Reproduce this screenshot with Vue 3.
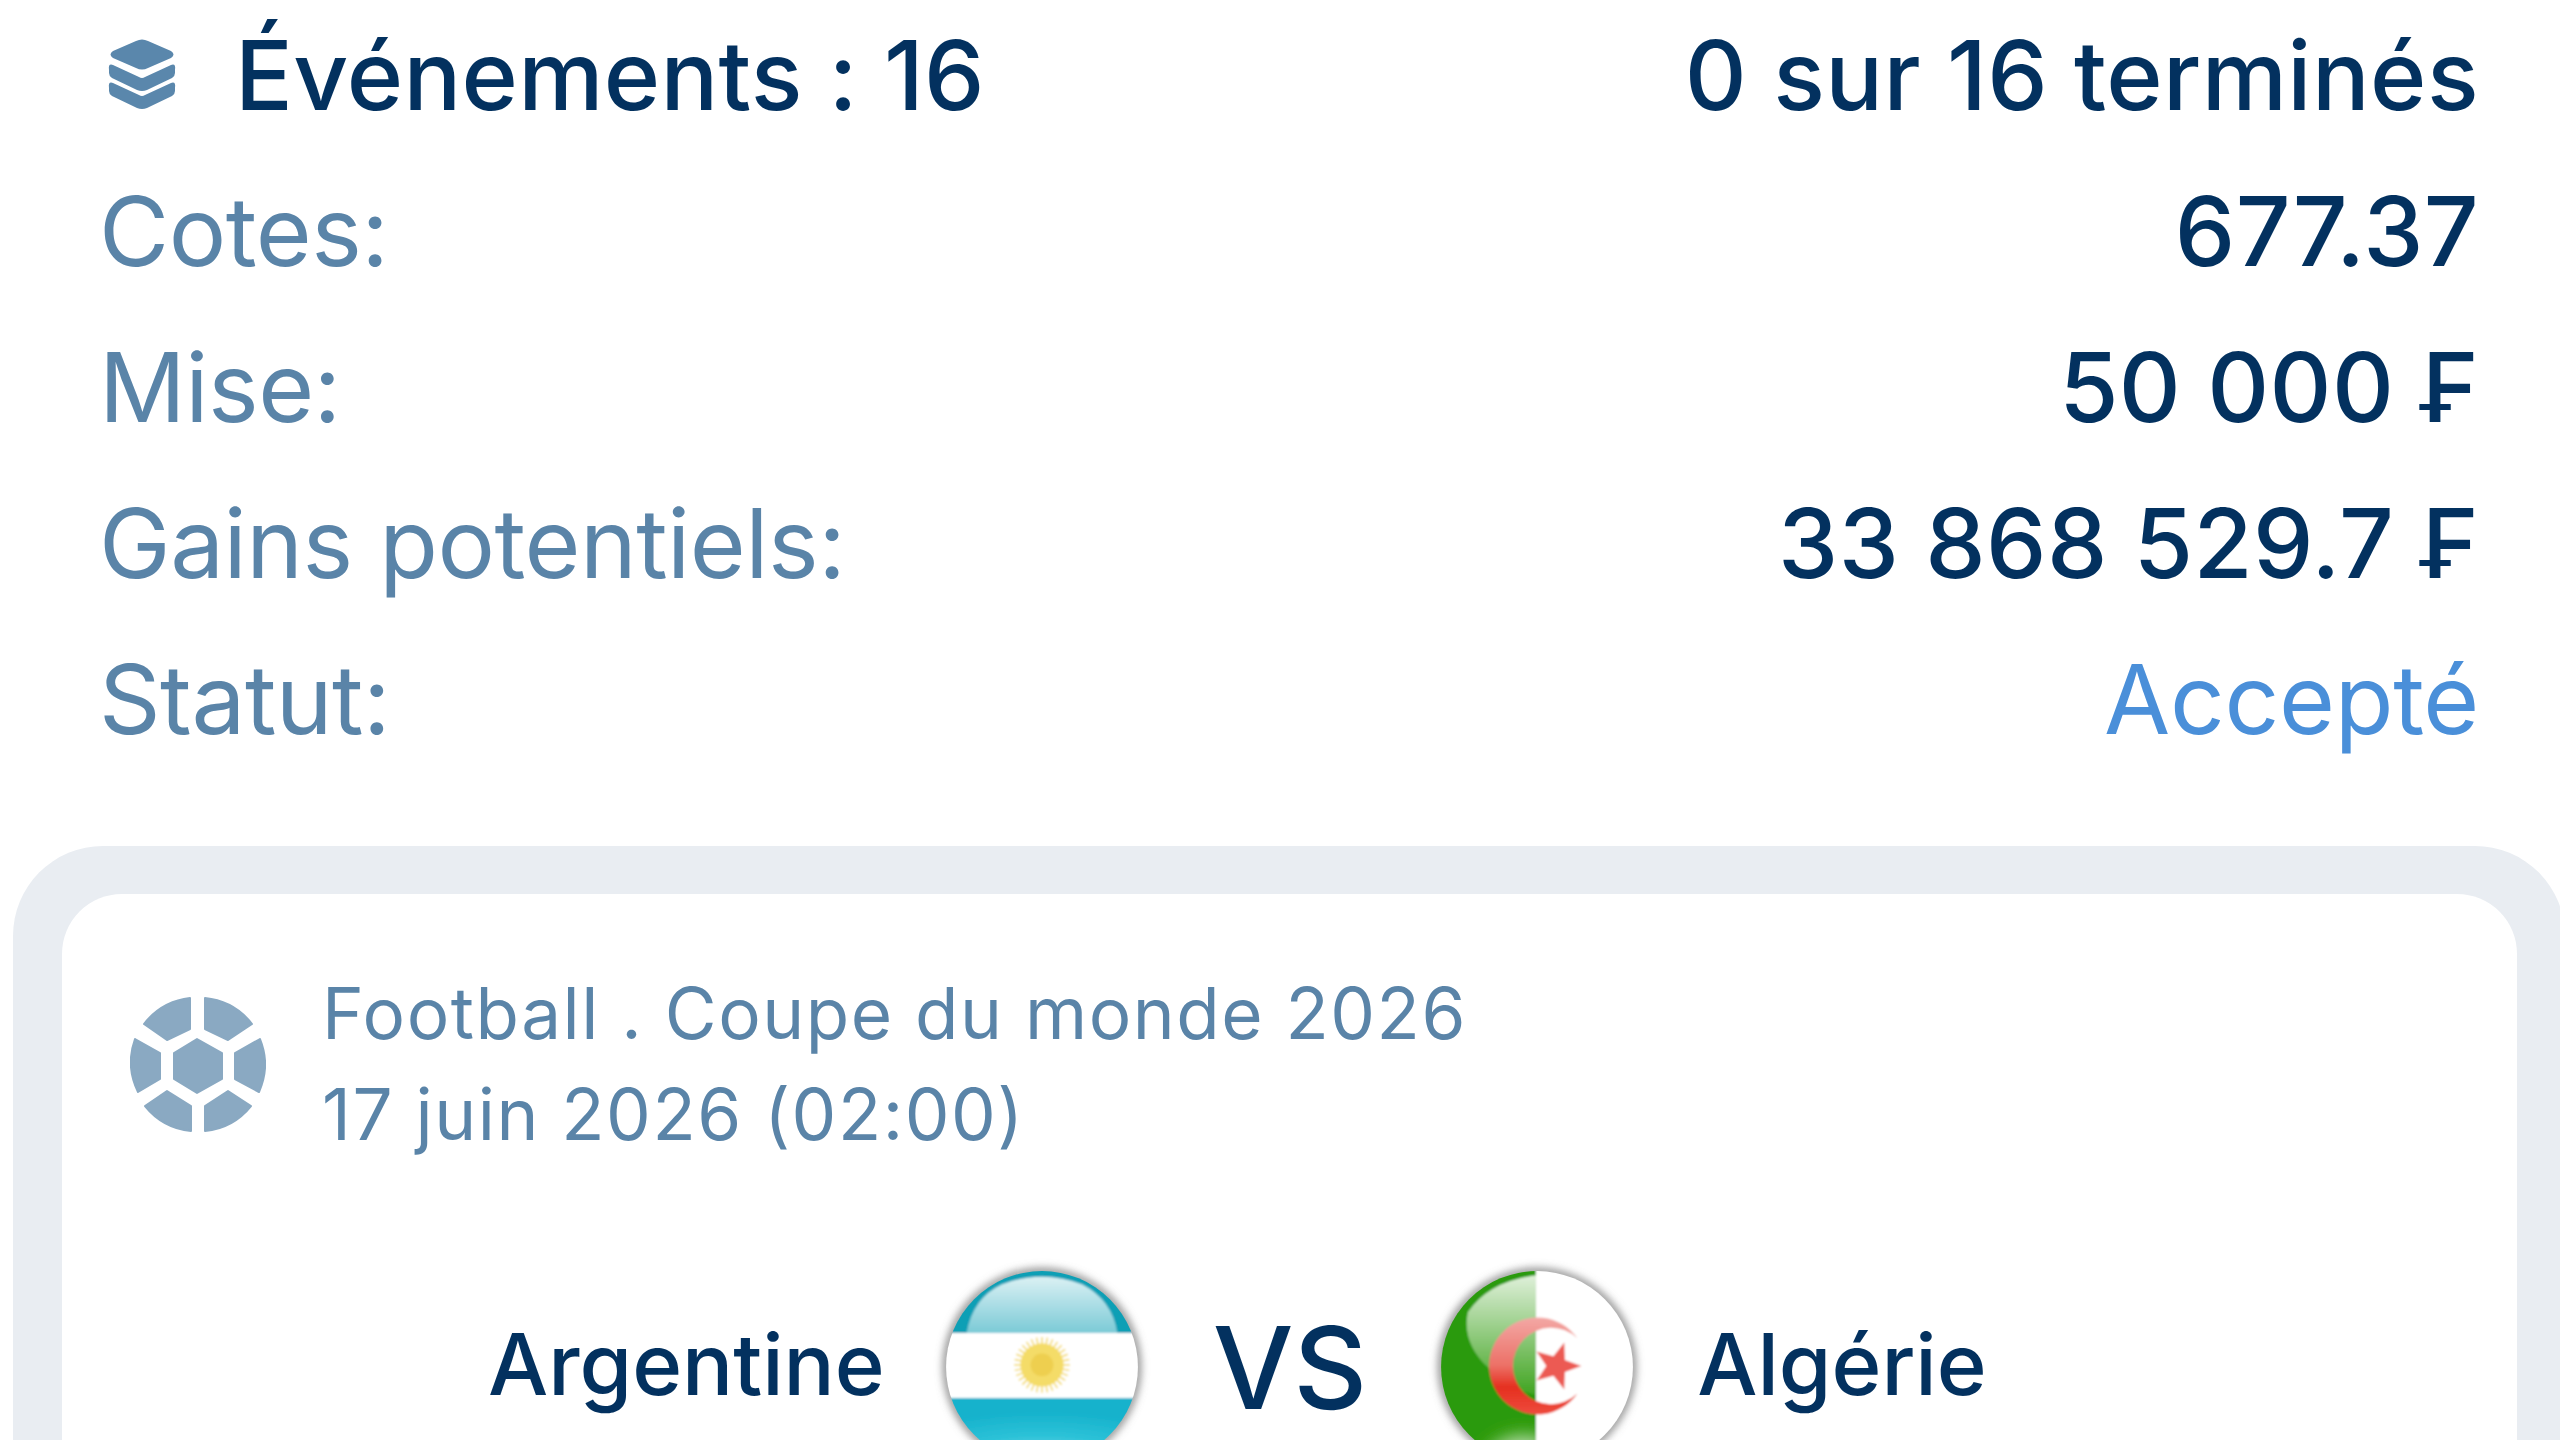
<template>
  <div class="page">
    <section class="summary">
      <div class="row">
        <div class="events">
          <svg class="layers" viewBox="0 0 68 72">
            <path d="M28 2 Q34 -1 40 2 L63 12 Q68 15.5 63 19 L40 29 Q34 32 28 29 L5 19 Q0 15.5 5 12Z" fill="#5a87ac" />
            <path d="M5 26 L31 38 Q34 40 37 38 L63 26 Q68 24 67 31 V34 Q67 37 64 39 L39 51 Q34 53 29 51 L4 39 Q1 37 1 34 V31 Q0 24 5 26Z" fill="#5a87ac" />
            <path d="M5 44 L31 56 Q34 58 37 56 L63 44 Q68 42 67 49 V52 Q67 55 64 57 L39 69 Q34 71 29 69 L4 57 Q1 55 1 52 V49 Q0 42 5 44Z" fill="#5a87ac" />
          </svg>
          <span>Événements : 16</span>
        </div>
        <span class="value">0 sur 16 terminés</span>
      </div>
      <div v-for="item in details" :key="item.label" class="row">
        <span class="label">{{ item.label }}</span>
        <span class="value" :class="{ accepted: item.accepted }">{{ item.value }}</span>
      </div>
    </section>

    <section class="card">
      <div class="card-inner">
        <div class="league">
          <svg class="ball" viewBox="0 0 136 136">
            <g fill="#8aa9c2" stroke="#8aa9c2" stroke-width="2" stroke-linejoin="round">
              <path d="M67 43 L92 57 V83 L67 97 L44 83 V57Z" />
              <path d="M60 2 V33 L37 44 L14 28 A68 68 0 0 1 60 2Z" />
              <path d="M75 2 V33 L98 44 L122 28 A68 68 0 0 0 75 2Z" />
              <path d="M5 43 L30 57 V83 L8 96 A68 68 0 0 1 5 43Z" />
              <path d="M130 43 L105 57 V83 L129 96 A68 68 0 0 0 130 43Z" />
              <path d="M37 95 L61 110 V135 A68 68 0 0 1 15 110Z" />
              <path d="M98 95 L75 110 V135 A68 68 0 0 0 121 110Z" />
            </g>
          </svg>
          <div class="league-text">
            <div>Football . Coupe du monde 2026</div>
            <div>17 juin 2026 (02:00)</div>
          </div>
        </div>

        <div class="match">
          <span class="team team-home">Argentine</span>
          <svg class="flag" viewBox="0 0 190 190">
            <defs>
              <clipPath id="disc"><circle cx="95" cy="95" r="93" /></clipPath>
              <linearGradient id="gloss" x1="0" y1="0" x2="0" y2="1">
                <stop offset="0" stop-color="#fff" stop-opacity=".85" />
                <stop offset="1" stop-color="#fff" stop-opacity=".45" />
              </linearGradient>
              <linearGradient id="glossDz" x1="0" y1="0" x2="0" y2="1">
                <stop offset="0" stop-color="#fff" stop-opacity=".85" />
                <stop offset="1" stop-color="#fff" stop-opacity=".1" />
              </linearGradient>
              <radialGradient id="skyBottom" cx=".5" cy="1.1" r=".9">
                <stop offset="0" stop-color="#9fe3ee" />
                <stop offset=".6" stop-color="#2cc2d8" />
                <stop offset="1" stop-color="#16b2cc" />
              </radialGradient>
              <linearGradient id="redMoon" x1="0" y1="0" x2="0" y2="1">
                <stop offset="0" stop-color="#f3a8a5" />
                <stop offset=".5" stop-color="#ec7066" />
                <stop offset=".72" stop-color="#e5301f" />
                <stop offset="1" stop-color="#ee4b3e" />
              </linearGradient>
              <filter id="soft" x="-20%" y="-20%" width="140%" height="140%">
                <feGaussianBlur stdDeviation="4" />
              </filter>
              <filter id="soft1" x="-20%" y="-20%" width="140%" height="140%">
                <feGaussianBlur stdDeviation=".8" />
              </filter>
              <filter id="soft8" x="-50%" y="-50%" width="200%" height="200%">
                <feGaussianBlur stdDeviation="9" />
              </filter>
            </defs>
            <circle cx="95" cy="95" r="92" fill="none" stroke="#7d7d7d" stroke-width="7" filter="url(#soft)" />
            <g clip-path="url(#disc)" filter="url(#soft1)">
              <rect width="190" height="190" fill="#fff" />
              <rect width="190" height="62" fill="#0f9fb5" />
              <path d="M22 62 Q28 28 56 15 Q95 0 134 15 Q163 30 168 62Z" fill="url(#gloss)" />
              <rect y="125" width="190" height="65" fill="url(#skyBottom)" />
              <g stroke="#f2d64f" stroke-width="1.4">
                <line v-for="a in rays" :key="a" x1="95" y1="93" :x2="95 + 27 * Math.cos(a)" :y2="93 + 27 * Math.sin(a)" />
              </g>
              <circle cx="95" cy="93" r="21" fill="#f4dc68" />
              <circle cx="95" cy="93" r="11" fill="#eecf50" />
            </g>
          </svg>
          <span class="vs">VS</span>
          <svg class="flag flag-dz" viewBox="0 0 190 190">
            <circle cx="95" cy="95" r="92" fill="none" stroke="#7d7d7d" stroke-width="7" filter="url(#soft)" />
            <g clip-path="url(#disc)" filter="url(#soft1)">
              <rect width="190" height="190" fill="#fff" />
              <rect width="94" height="190" fill="#2b9a08" />
              <path d="M94 6 Q48 12 28 42 Q22 72 48 96 Q68 118 94 122Z" fill="url(#glossDz)" />
              <g clip-path="url(#greenHalf)">
                <ellipse cx="82" cy="192" rx="38" ry="30" fill="#fff" fill-opacity=".7" filter="url(#soft8)" />
              </g>
              <path d="M134 67 A47 47 0 1 0 134 121 A37 37 0 1 1 134 67Z" fill="url(#redMoon)" />
              <polygon :points="star" fill="#ec5a52" />
            </g>
            <clipPath id="greenHalf"><rect width="94" height="190" /></clipPath>
          </svg>
          <span class="team team-away">Algérie</span>
        </div>
      </div>
    </section>
  </div>
</template>

<script setup>
const details = [
  { label: 'Cotes:', value: '677.37' },
  { label: 'Mise:', value: '50 000 ₣' },
  { label: 'Gains potentiels:', value: '33 868 529.7 ₣' },
  { label: 'Statut:', value: 'Accepté', accepted: true },
]

// rayons du soleil argentin
const rays = Array.from({ length: 32 }, (_, i) => (i * Math.PI) / 16)

// etoile algerienne
const star = Array.from({ length: 10 }, (_, i) => {
  const r = i % 2 ? 10 : 24
  const a = (i * Math.PI) / 5
  return `${(114 + r * Math.cos(a)).toFixed(1)},${(94 + r * Math.sin(a)).toFixed(1)}`
}).join(' ')
</script>

<style>
html,
body {
  background: #fff;
  overflow: hidden;
}
</style>

<style scoped>
.page {
  height: 1440px;
  overflow: hidden;
  font-family: Inter, "Liberation Sans", sans-serif;
  color: #03315f;
}

.summary {
  padding: 0 81px 0 99px;
  margin-top: -3px;
}

.row {
  height: 156px;
  display: flex;
  align-items: center;
  justify-content: space-between;
  font-size: 96px;
  white-space: nowrap;
}

.events {
  display: flex;
  align-items: center;
  gap: 59px;
  font-weight: 500;
  margin-left: 9px;
  letter-spacing: .3px;
}

.layers {
  width: 68px;
  height: 72px;
}

.label {
  color: #5a84a8;
  letter-spacing: -.5px;
}

.value {
  font-weight: 500;
  letter-spacing: .4px;
}

.accepted {
  color: #4a8fd9;
  font-weight: 400;
  letter-spacing: -.3px;
}

.card {
  margin: 69px -5px 0 13px;
  padding: 48px 48px 0 49px;
  background: #e9edf2;
  border-radius: 90px 90px 0 0;
}

.card-inner {
  background: #fff;
  border-radius: 60px 60px 0 0;
  height: 600px;
  padding: 69px 0 0 68px;
}

.league {
  display: flex;
  align-items: center;
  gap: 56px;
}

.ball {
  width: 136px;
  height: 136px;
  flex: none;
}

.league-text {
  font-size: 71px;
  line-height: 101px;
  letter-spacing: 1.5px;
  color: #5a84a8;
}

.match {
  display: flex;
  align-items: center;
  margin: 104px 0 0 -68px;
  padding-left: 426px;
}

.team {
  font-size: 85px;
  font-weight: 500;
  margin-bottom: 6px;
}

.team-home {
  margin-right: 59px;
}

.team-away {
  margin-left: 62px;
}

.flag {
  width: 196px;
  height: 196px;
  flex: none;
  overflow: visible;
}

.vs {
  font-size: 114px;
  font-weight: 500;
  margin: 0 72px 0 73px;
}
</style>
